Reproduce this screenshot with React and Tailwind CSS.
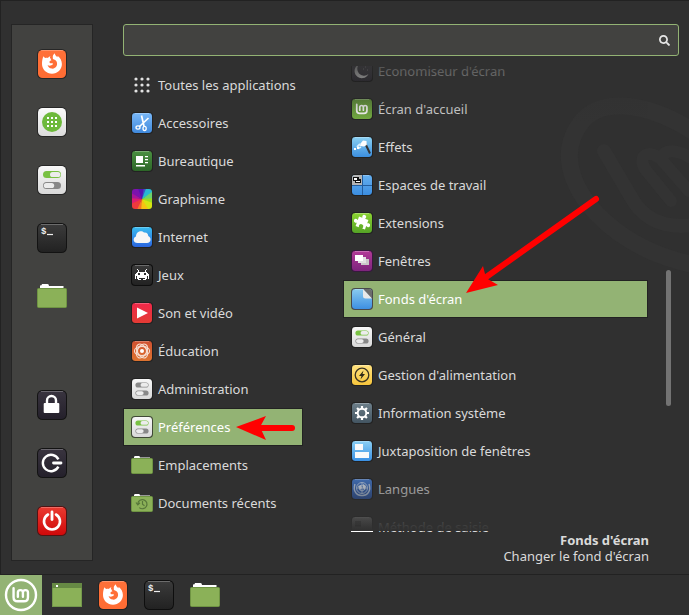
import { useId, useState } from "react";
import { FaSearch } from "react-icons/fa";

const Tile = ({ size = 22, from, to, edge = "#1c1c1c", children }) => {
  const id = useId();

  return (
    <svg width={size} height={size} viewBox={`0 0 ${size} ${size}`} className="shrink-0" aria-hidden="true">
      <defs>
        <linearGradient id={id} x1="0" y1="0" x2="0" y2="1">
          <stop offset="0" stopColor={from} />
          <stop offset="1" stopColor={to} />
        </linearGradient>
      </defs>
      <rect x="0" y="0" width={size} height={size} rx={size / 5.5} fill={edge} opacity="0.7" />
      <rect x="1" y="1" width={size - 2} height={size - 2} rx={size / 6.5} fill={`url(#${id})`} />
      <path d={`M4 1.5H${size - 4}`} stroke="#fff" opacity="0.25" />
      {children}
    </svg>
  );
};

const MintMark = ({ color = "#fff", width = 2 }) => (
  <g fill="none" stroke={color} strokeWidth={width} strokeLinecap="round" strokeLinejoin="round">
    <path d="M-6.2 -5.6V1.8Q-6.2 5.2 -2.8 5.2H2.4Q5.8 5.2 5.8 1.8V-2A2.1 2.1 0 0 0 1.6 -2V1.4V-2A2.1 2.1 0 0 0 -2.6 -2V1.4" />
  </g>
);

const Toggles = ({ size = 22, on = "#79c143" }) => (
  <Tile size={size} from="#f7f7f7" to="#d9d9d9">
    <g transform={`scale(${size / 30})`}>
      <rect x="6" y="6" width="18" height="7" rx="3.5" fill={on} />
      <rect x="13" y="6.9" width="10.4" height="5.2" rx="2.6" fill="#ececec" />
      <rect x="6" y="17" width="18" height="7" rx="3.5" fill="#888" />
      <rect x="6.8" y="17.9" width="10.4" height="5.2" rx="2.6" fill="#ececec" />
    </g>
  </Tile>
);

const Firefox = () => (
  <Tile size={30} from="#ff7139" to="#ff6c33">
    <path
      fill="#fff"
      d="M6.6 7.2c.5 1 1.1 1.6 1.9 1.8.7-.3 1.7-.3 2.5 0 .5-.8 1.6-1.6 2.5-1.7-.6.7-.7 1.8-.2 2.3.6.6 1.8.5 2.5.8.4-1.1-.4-2.6.2-3.8.5-1.1 1.2-1.6 1.7-2.3.4 1.7 1.4 2.7 2.6 4 .3-.4.4-.9.3-1.5 2.7 2 4.2 4.8 4.3 8.3 0 5.5-4.4 9.7-9.9 9.7S5 20.500 5 15.100c0-3.200.4-6 1.600-7.900z"
    />
    <path
      fill="#ff6f37"
      d="M13.500 10.100c1.500-.2 3.600 0 5 1.200 1.500 1.200 2.100 3.500 1.200 5.500-.8 2-2.900 3-4.900 2.800-2.100-.2-3.900-1.700-4.200-3.600 1 .8 2.500.9 3.700.3 1-.5 1.800-.9 1.700-1.600-.2-.5-1-.3-2-.4-1.100-.1-1.700-.8-1.600-1.600.3-.7 1.400-.5 1.800-1.200.2-.5-.2-1-.7-1.400z"
    />
  </Tile>
);

const AppGrid = () => (
  <Tile size={30} from="#fafafa" to="#dcdcdc">
    <circle cx="15" cy="15" r="10" fill="#6db93b" />
    {[10, 14, 18].map((y) => [10, 14, 18].map((x) => (
      <rect key={`${x}-${y}`} x={x} y={y} width="2" height="2" fill="#fff" />
    )))}
  </Tile>
);

const Terminal = () => (
  <Tile size={30} from="#3b3b3b" to="#222" edge="#000">
    <text x="4" y="11" fill="#eee" fontSize="9" fontWeight="bold" fontFamily="Liberation Mono, monospace">$</text>
    <path d="M10 11.500H16" stroke="#eee" strokeWidth="1.200" />
  </Tile>
);

const Lock = () => (
  <Tile size={30} from="#39343f" to="#24202b" edge="#000">
    <path d="M10 14V10.500A4.500 4.500 0 0 1 19 10.500V14" fill="none" stroke="#fff" strokeWidth="2.400" />
    <rect x="6.700" y="13" width="15.600" height="10" rx="1" fill="#fff" />
  </Tile>
);

const Logout = () => (
  <Tile size={30} from="#39343f" to="#24202b" edge="#000">
    <path d="M21.400 11.400A8.200 8.200 0 1 0 21.400 18.600" fill="none" stroke="#fff" strokeWidth="2.400" strokeLinecap="butt" />
    <path d="M16.500 15H24" stroke="#fff" strokeWidth="2.800" strokeLinecap="round" />
  </Tile>
);

const Power = () => (
  <Tile size={30} from="#ea3a30" to="#d0090a" edge="#5a0000">
    <path d="M11 8.500A8 8 0 1 0 19 8.500" fill="none" stroke="#fff" strokeWidth="2.600" strokeLinecap="round" />
    <path d="M15 6V13.500" stroke="#fff" strokeWidth="2.800" strokeLinecap="round" />
  </Tile>
);

const Folder = () => (
  <svg width="30" height="30" viewBox="0 0 30 30" className="shrink-0" aria-hidden="true">
    <path d="M3 8V4.500Q5 4.500 5 3H10.500Q12 3 12 5H26.500V8z" fill="#fff" />
    <rect x="0.500" y="7.500" width="29" height="19" rx="1" fill="#8bb158" stroke="#6f9443" />
  </svg>
);

const SmallFolder = ({ recent }) => (
  <svg width="22" height="22" viewBox="0 0 22 22" className="shrink-0" aria-hidden="true">
    <path d="M3 5V3Q3.500 3 3.500 2H8Q9 2 9 3.500H19V5z" fill="#fff" />
    <rect x="0.500" y="4.500" width="21" height="15" rx="1" fill="#8bb158" stroke="#6f9443" />
    {recent && (
      <g fill="none" stroke="#57773a" strokeWidth="1.200">
        <path d="M6.800 11.500A4.600 4.600 0 1 1 8.300 15.600M5 10.500L6.800 12.800L9 10.800" />
        <path d="M11.500 9V12.300L13.500 13.800" />
      </g>
    )}
  </svg>
);

const Desktop = () => (
  <svg width="30" height="30" viewBox="0 0 30 30" aria-hidden="true">
    <rect y="3" width="30" height="24" fill="#8bb158" />
    <rect y="3" width="30" height="5" fill="#668944" />
    <rect x="4" y="5" width="2" height="2" fill="#fff" />
    <rect x="0.500" y="3.500" width="29" height="23" fill="none" stroke="#668944" opacity="0.6" />
  </svg>
);

const AllApps = () => (
  <svg width="22" height="22" viewBox="0 0 22 22" className="shrink-0" aria-hidden="true">
    {[5, 11, 17].map((y) => [5, 11, 17].map((x) => (
      <circle key={`${x}-${y}`} cx={x} cy={y} r="1.600" fill="#e2e2e2" />
    )))}
  </svg>
);

const Scissors = () => (
  <Tile from="#79b8f8" to="#4089dc">
    <g fill="none" stroke="#fff" strokeWidth="1.300">
      <path d="M10.500 3.500L13 14M17.500 6L8.500 14.500" strokeWidth="1.700" />
      <ellipse cx="7" cy="15.500" rx="2" ry="1.600" />
      <ellipse cx="13.600" cy="16.500" rx="1.600" ry="2.100" />
    </g>
  </Tile>
);

const Office = () => (
  <Tile from="#4a9040" to="#2d6628">
    <path d="M5 6H12V13H5zM5 15H14V16.500H5zM14 6H17V7.200H14zM14 9H17V10.200H14zM14 12H17V13.200H14z" fill="#fff" />
  </Tile>
);

const Graphics = () => {
  const id = useId();

  return (
    <svg width="22" height="22" viewBox="0 0 22 22" className="shrink-0" aria-hidden="true">
      <clipPath id={id}>
        <rect x="1" y="1" width="20" height="20" rx="3" />
      </clipPath>
      <g clipPath={`url(#${id})`}>
        <path d="M11 11L4 -2H14z" fill="#5414b0" />
        <path d="M11 11L13 -2H18z" fill="#3b52c4" />
        <path d="M11 11L16 -2L24 4z" fill="#27b8d2" />
        <path d="M11 11L24 2V12z" fill="#6bd36c" />
        <path d="M11 11L24 10V18z" fill="#9bdc21" />
        <path d="M11 11L24 16V24H16z" fill="#d5e512" />
        <path d="M11 11L19 24H8z" fill="#f6c313" />
        <path d="M11 11L10 24H2z" fill="#f47a27" />
        <path d="M11 11L5 24H-2V14z" fill="#ed3a3c" />
        <path d="M11 11L-2 17V8z" fill="#dc1d70" />
        <path d="M11 11L-2 10V2z" fill="#a8159a" />
        <path d="M11 11L-2 4V-2H6z" fill="#7c12ad" />
      </g>
    </svg>
  );
};

const Cloud = () => (
  <Tile from="#39bdf0" to="#2a65df">
    <path d="M6.500 17C1.800 17 1.600 11.500 5 10.500C5 5.500 10.500 3.800 13 6.500C16 6 17.500 8.500 17.200 10C20.800 11.500 20.300 17 16 17z" fill="#f6f6f6" />
  </Tile>
);

const Invader = () => (
  <Tile from="#3a3a3a" to="#222" edge="#000">
    <path
      fill="#fff"
      fillRule="evenodd"
      d="M6 5H7V6H8V8H14V6H15V5H16V6H15V8H16V9H17V10H18V15H17V12H16V15H15V16H12V15H14V14H8V15H10V16H7V15H6V12H5V15H4V10H5V9H6V8H7V6H6zM7 9V11H9V9zM13 9V11H15V9z"
    />
  </Tile>
);

const Play = () => (
  <Tile from="#f0284a" to="#e33b34">
    <path d="M6 5.500L17 11L6 16.500z" fill="#fff" />
  </Tile>
);

const Atom = () => (
  <Tile from="#cf5131" to="#dd7330">
    <g fill="none" stroke="#f6ddd0" strokeWidth="1.100">
      {[0, 60, 120].map((a) => (
        <ellipse key={a} cx="11" cy="11" rx="7.600" ry="4.800" transform={`rotate(${a} 11 11)`} />
      ))}
      <circle cx="11" cy="11" r="4.500" />
    </g>
    <circle cx="11" cy="11" r="2" fill="#fff" />
  </Tile>
);

const Moon = () => (
  <Tile from="#4a4754" to="#26222e" edge="#000">
    <path d="M8.500 4A7.300 7.300 0 1 0 17.500 14A6.300 6.300 0 0 1 8.500 4z" fill="#fff" />
    <path d="M14 7H15M16 10H17M12 9H13" stroke="#aaa" />
  </Tile>
);

const MintTile = () => (
  <Tile from="#659a3a" to="#75ae41">
    <g transform="translate(11 11) scale(.85)">
      <MintMark width={2} />
    </g>
  </Tile>
);

const Wand = () => (
  <Tile from="#8ad0f2" to="#3c8fdf">
    <path d="M14.500 8L19 17.500" stroke="#333" strokeWidth="2" />
    <path d="M9.500 7.500L12 4.500L15.500 5L15.800 9L13 10.500L9 10z" fill="#fff" />
    <path d="M9 8L6 11M10 11L7 12.500" stroke="#d8f0ff" strokeWidth="1.800" />
    <path d="M3 13H5M6 12H8" stroke="#fff" strokeWidth="2" />
  </Tile>
);

const Workspaces = () => (
  <Tile from="#66b0f0" to="#3b8de0">
    <path d="M4 1H11V11H1V4Q1 1 4 1z" fill="#b4b4b4" />
    <path d="M11.500 1V21M1 11.500H21" stroke="#235d9d" />
    <path d="M2 3H8V5H10V9H4V7H2z" fill="#111" />
    <path d="M3 4H6V6H3zM5 7H9V8H5z" fill="#fff" />
  </Tile>
);

const Puzzle = () => (
  <Tile from="#8cd432" to="#55a326">
    <g transform="rotate(20 11 11)">
      <path
        fill="#fff"
        d="M6 6H9.500L9 4.500A2 2 0 1 1 13 4.500L12.500 6H16V9.500L17.500 9A2 2 0 1 1 17.500 13L16 12.500V16H13L13.500 14.500A2 2 0 1 0 9 14.500L9.500 16H6V12.500L4.500 13A2 2 0 1 1 4.500 9L6 9.500z"
      />
    </g>
  </Tile>
);

const Windows = () => (
  <Tile from="#b23a98" to="#7d257c" edge="#3a0f45">
    <path d="M10 9H18V15H10z" fill="#c9c9c9" />
    <path d="M7 7H15V13H7z" fill="#e2e2e2" />
    <path d="M4 5H12V11H4z" fill="#fff" />
  </Tile>
);

const Wallpaper = () => (
  <Tile from="#8acbf0" to="#3d8fe2" edge="#2a1c3c">
    <path d="M12 1H18Q21 1 21 4V11z" fill="#6c6c6c" />
    <path d="M12 1L21 10.500H14.500Q12 10.500 12 8z" fill="#e9e9e9" />
  </Tile>
);

const Energy = () => (
  <Tile from="#ffe280" to="#f6c53c">
    <circle cx="11" cy="11" r="6.800" fill="none" stroke="#3b3321" strokeWidth="1.300" />
    <path d="M12.500 6.500L8 12H10.500L9.500 15.500L14 10H11.500z" fill="#2f2919" />
  </Tile>
);

const Gear = () => (
  <Tile from="#6d7f8a" to="#435562">
    <g stroke="#fff" strokeWidth="2.200">
      {[0, 45, 90, 135].map((a) => (
        <path key={a} d="M11 4V6.500M11 15.500V18" transform={`rotate(${a} 11 11)`} />
      ))}
    </g>
    <circle cx="11" cy="11" r="4.300" fill="none" stroke="#fff" strokeWidth="1.900" />
  </Tile>
);

const Tiling = () => (
  <Tile from="#8bd0f4" to="#3a90e3">
    <path d="M4 4H12V10H4zM4 12H18V18H4z" fill="#fafafa" />
  </Tile>
);

const Globe = () => (
  <Tile from="#4478c8" to="#2b57ad">
    <g fill="none" stroke="#bcd0ec" strokeWidth="0.900">
      <circle cx="11" cy="10" r="5.500" />
      <circle cx="11" cy="10" r="2.800" />
      <path d="M11 4.500V15.500M5.500 10H16.500" />
      <path d="M4 6C1.500 13 6 18 11 17.500C16 18 20.500 13 18 6" strokeWidth="1.400" />
    </g>
    <path d="M7 8L10 7L11 10L9 12zM12 6L15 8L14 12L12 10z" fill="#dfe9f7" />
  </Tile>
);

const Keyboard = () => (
  <Tile from="#aaa" to="#777">
    <path d="M5 5V10M7 5V10M9 5V10M4 10H10" stroke="#222" />
    <rect y="15" width="22" height="2" fill="#fff" />
  </Tile>
);

const favorites = [
  { name: "Firefox", icon: <Firefox /> },
  { name: "Logithèque", icon: <AppGrid /> },
  { name: "Paramètres système", icon: <Toggles size={30} /> },
  { name: "Terminal", icon: <Terminal /> },
  { name: "Fichiers", icon: <Folder /> },
];

const session = [
  { name: "Verrouiller l'écran", icon: <Lock /> },
  { name: "Déconnexion", icon: <Logout /> },
  { name: "Quitter", icon: <Power /> },
];

const categories = [
  { name: "Toutes les applications", icon: <AllApps /> },
  { name: "Accessoires", icon: <Scissors /> },
  { name: "Bureautique", icon: <Office /> },
  { name: "Graphisme", icon: <Graphics /> },
  { name: "Internet", icon: <Cloud /> },
  { name: "Jeux", icon: <Invader /> },
  { name: "Son et vidéo", icon: <Play /> },
  { name: "Éducation", icon: <Atom /> },
  { name: "Administration", icon: <Toggles on="#888" /> },
  { name: "Préférences", icon: <Toggles /> },
  { name: "Emplacements", icon: <SmallFolder /> },
  { name: "Documents récents", icon: <SmallFolder recent /> },
];

const applications = [
  { name: "Économiseur d'écran", icon: <Moon /> },
  { name: "Écran d'accueil", icon: <MintTile /> },
  { name: "Effets", icon: <Wand /> },
  { name: "Espaces de travail", icon: <Workspaces /> },
  { name: "Extensions", icon: <Puzzle /> },
  { name: "Fenêtres", icon: <Windows /> },
  { name: "Fonds d'écran", icon: <Wallpaper /> },
  { name: "Général", icon: <Toggles /> },
  { name: "Gestion d'alimentation", icon: <Energy /> },
  { name: "Information système", icon: <Gear /> },
  { name: "Juxtaposition de fenêtres", icon: <Tiling /> },
  { name: "Langues", icon: <Globe /> },
  { name: "Méthode de saisie", icon: <Keyboard /> },
];

const MenuRow = ({ item, active, onClick }) => (
  <button
    type="button"
    onClick={onClick}
    className={`flex h-[38px] w-full shrink-0 items-center gap-[5px] border px-[7px] text-left whitespace-nowrap ${
      active ? "border-[#222222] bg-[#93b374] text-white" : "border-transparent"
    }`}
  >
    {item.icon}
    <span className="pt-0.5">{item.name}</span>
  </button>
);

const IconButton = ({ item }) => (
  <button type="button" aria-label={item.name} className="cursor-pointer">
    {item.icon}
  </button>
);

const Watermark = () => (
  <svg width="130" height="190" viewBox="0 0 130 190" className="absolute top-[95px] right-0" aria-hidden="true">
    <g fill="none" stroke="#333333" strokeLinecap="round">
      <path d="M135 37C90 8 45 2 24 25C-5 60 15 105 60 138C82 154 108 164 135 170" strokeWidth="17" />
      <path d="M45 56L72 102C84 124 105 134 135 130" strokeWidth="14" />
      <path d="M112 106L86 74C78 60 90 54 102 64L130 96M102 64C106 52 120 56 130 62" strokeWidth="12" />
    </g>
  </svg>
);

const Arrows = () => (
  <svg width="400" height="300" viewBox="0 0 400 300" className="pointer-events-none absolute top-[180px] left-[220px]" aria-hidden="true">
    <g stroke="#f00" strokeWidth="6" strokeLinecap="round">
      <path d="M376 19L262 100" />
      <path d="M72 248H36" />
    </g>
    <path d="M246 113L263 86L266 98L278 105z" fill="#f00" />
    <path d="M16 247L46 236L40 247L46 260z" fill="#f00" />
  </svg>
);

const App = () => {
  const [query, setQuery] = useState("");
  const [category, setCategory] = useState("Préférences");
  const [selected, setSelected] = useState("Fonds d'écran");

  return (
    <div className="relative flex h-screen flex-col overflow-hidden bg-[#303030] font-['Noto_Sans',sans-serif] text-[13px] text-[#dadada]">
      <Watermark />
      <main className="relative flex min-h-0 flex-1 border-t border-l border-[#222222] pt-[23px] pr-[10px] pl-[10px]">
        <nav className="mb-[13px] flex w-[82px] shrink-0 flex-col items-center justify-between border border-[#252525] bg-[#424240] py-6">
          <div className="flex flex-col gap-7">
            {favorites.map((item) => (
              <IconButton key={item.name} item={item} />
            ))}
          </div>
          <div className="flex flex-col gap-7">
            {session.map((item) => (
              <IconButton key={item.name} item={item} />
            ))}
          </div>
        </nav>

        <div className="ml-[30px] flex min-w-0 flex-1 flex-col">
          <label className="flex h-8 shrink-0 items-center rounded-[3px] border border-[#93b374] bg-[#424240] pr-2">
            <input
              type="text"
              aria-label="Rechercher"
              value={query}
              onChange={(e) => setQuery(e.target.value)}
              className="min-w-0 flex-1 bg-transparent px-2 outline-none"
            />
            <FaSearch size={11} color="#e6e6e6" />
          </label>

          <div className="mt-[10px] flex min-h-0 flex-1 pr-2">
            <div className="flex w-[180px] shrink-0 flex-col">
              {categories.map((item) => (
                <MenuRow
                  key={item.name}
                  item={item}
                  active={item.name === category}
                  onClick={() => setCategory(item.name)}
                />
              ))}
            </div>
            <div className="relative ml-10 min-w-0 flex-1 overflow-hidden">
              <div className="-mt-[14px] flex flex-col">
                {applications.map((item) => (
                  <MenuRow
                    key={item.name}
                    item={item}
                    active={item.name === selected}
                    onClick={() => setSelected(item.name)}
                  />
                ))}
              </div>
              {/* fades at both ends of the scrolled list */}
              <div className="pointer-events-none absolute inset-x-0 top-0 h-14 bg-linear-to-b from-[#303030]/80 to-[#303030]/0" />
              <div className="pointer-events-none absolute inset-x-0 bottom-px h-16 bg-linear-to-t from-[#303030] to-[#303030]/0" />
            </div>
            <div className="ml-[18px] flex w-[5px] flex-col">
              <div className="grow-[204]" />
              <div className="grow-[137] rounded-full bg-[#737373]" />
              <div className="grow-[126]" />
            </div>
          </div>

          <div className="shrink-0 pr-[30px] pb-[10px] text-right leading-4">
            <p className="font-bold">{selected}</p>
            <p>Changer le fond d'écran</p>
          </div>
        </div>
      </main>

      <footer className="relative flex h-[41px] shrink-0 items-center border-t border-[#222222]">
        <button type="button" aria-label="Menu" className="mr-0.5 flex h-full w-[42px] items-center justify-center bg-[#93b374]">
          <svg width="34" height="34" viewBox="-17 -17 34 34" aria-hidden="true">
            <circle r="15" fill="none" stroke="#fff" strokeWidth="2.400" />
            <g transform="scale(1.200)">
              <MintMark width={2} />
            </g>
          </svg>
        </button>
        {[
          { name: "Afficher le bureau", icon: <Desktop /> },
          { name: "Firefox", icon: <Firefox /> },
          { name: "Terminal", icon: <Terminal /> },
          { name: "Fichiers", icon: <Folder /> },
        ].map((item) => (
          <div key={item.name} className="flex w-[46px] justify-center">
            <IconButton item={item} />
          </div>
        ))}
      </footer>
      <Arrows />
    </div>
  );
};

export default App;
